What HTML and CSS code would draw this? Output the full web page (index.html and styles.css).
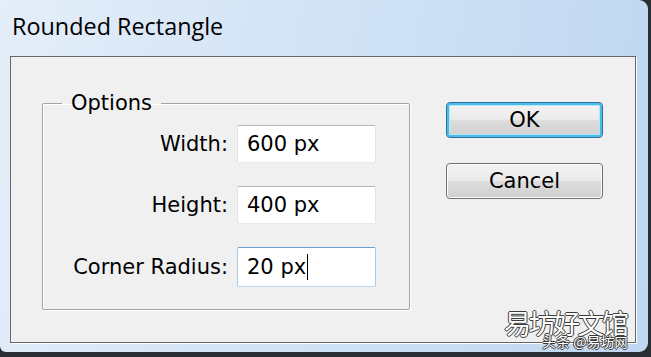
FILE: index.html
```html
<!DOCTYPE html>
<html lang="en">
<head>
  <meta charset="UTF-8" />
  <meta name="viewport" content="width=device-width, initial-scale=1.0">
  <title>Rounded Rectangle</title>
  <link rel="stylesheet" href="styles.css">
</head>
<body>
  <div class="window">
    <div class="titlebar">Rounded Rectangle</div>

    <div class="client">
      <fieldset class="options">
        <legend>Options</legend>
        <div class="row">
          <label>Width:</label>
          <div class="field">600 px</div>
        </div>
        <div class="row">
          <label>Height:</label>
          <div class="field">400 px</div>
        </div>
        <div class="row">
          <label>Corner Radius:</label>
          <div class="field focused">20 px<span class="caret"></span></div>
        </div>
      </fieldset>

      <div class="actions">
        <button class="btn default">OK</button>
        <button class="btn">Cancel</button>
      </div>
    </div>

    <div class="watermark">易坊好文馆</div>
    <div class="watermark-sub">头条 @易坊<span class="small">网</span></div>
  </div>
</body>
</html>
```

FILE: styles.css
```css
body { margin: 0; background: #2a2d31; font-family: "DejaVu Sans", sans-serif; }

.window {
  position: relative;
  width: 648px;
  height: 352px;
  border-radius: 0 9px 9px 6px;
  background: linear-gradient(100deg, #e4eef9 0%, #d2e3f5 45%, #bfd7f1 100%);
  overflow: hidden;
}

.titlebar {
  box-sizing: border-box;
  height: 56px;
  padding: 12px 0 0 12px;
  font-family: "Open Sans", sans-serif;
  font-size: 23.4px;
  line-height: 28px;
  color: #000;
}

.client {
  box-sizing: border-box;
  display: flex;
  align-items: flex-start;
  margin-left: 10px;
  width: 626px;
  height: 287px;
  padding-left: 31px;
  background: #f0f0f0;
  border: 1px solid #64666a;
  box-shadow: 1px 1px 0 #fdfdfd;
}

.options {
  box-sizing: border-box;
  width: 368px;
  margin: 34px 0 0 0;
  padding: 10px 0 22px 0;
  border: 1px solid #a4a4a4;
  border-radius: 2px;
  box-shadow: 1px 1px 0 #fff, inset 1px 1px 0 #fff;
  display: flex;
  flex-direction: column;
  gap: 23px;
}

.options legend {
  margin-left: 19px;
  padding: 0 9px;
  font-size: 21px;
  line-height: 24px;
  color: #000;
}

.row { display: flex; align-items: center; }

.row label {
  width: 185px;
  margin-right: 9px;
  text-align: right;
  font-size: 21px;
  color: #000;
}

.field {
  box-sizing: border-box;
  width: 139px;
  height: 38px;
  padding-left: 9px;
  font-size: 21px;
  line-height: 36px;
  color: #000;
  background: #fff;
  border: 1px solid;
  border-color: #b4b6bc #e2e3ea #e3e9ef #e2e3ea;
  border-radius: 2px;
}

.field.focused { height: 40px; line-height: 38px; border-color: #6d9ccb #a9cbe6 #b7d9ed #a9cbe6; }

.caret {
  display: inline-block;
  width: 1px;
  height: 26px;
  margin-left: 1px;
  vertical-align: -6px;
  background: #000;
}

.actions {
  display: flex;
  flex-direction: column;
  gap: 25px;
  margin: 45px 0 0 36px;
}

.btn {
  box-sizing: border-box;
  width: 157px;
  height: 36px;
  padding: 0;
  font-family: "DejaVu Sans", sans-serif;
  font-size: 21px;
  color: #000;
  border: 1px solid #707070;
  border-radius: 4px;
  background: linear-gradient(#f3f3f3 0%, #ebebeb 48%, #dddddd 52%, #cfcfcf 100%);
  box-shadow: inset 0 0 0 1px #fcfcfc;
}

.btn.default {
  border-color: #2f6f9f;
  box-shadow: inset 0 0 0 2px #49bde9, inset 0 0 0 3px #b9e6f7;
}

.watermark {
  position: absolute;
  left: 504px;
  top: 306px;
  font-family: "Noto Sans CJK SC", sans-serif;
  font-size: 27px;
  letter-spacing: -2.5px;
  line-height: 34px;
  color: #fff;
  text-shadow: 1px 0 0 #3a3a3a, -1px 0 0 #3a3a3a, 0 1px 0 #3a3a3a, 0 -1px 0 #3a3a3a;
}

.watermark-sub {
  position: absolute;
  left: 542px;
  top: 332px;
  font-family: "Noto Sans CJK SC", sans-serif;
  font-size: 14px;
  line-height: 18px;
  color: #fff;
  text-shadow: 1px 0 0 #3a3a3a, -1px 0 0 #3a3a3a, 0 1px 0 #3a3a3a, 0 -1px 0 #3a3a3a;
}

.watermark-sub .small { font-size: 13px; }
```
